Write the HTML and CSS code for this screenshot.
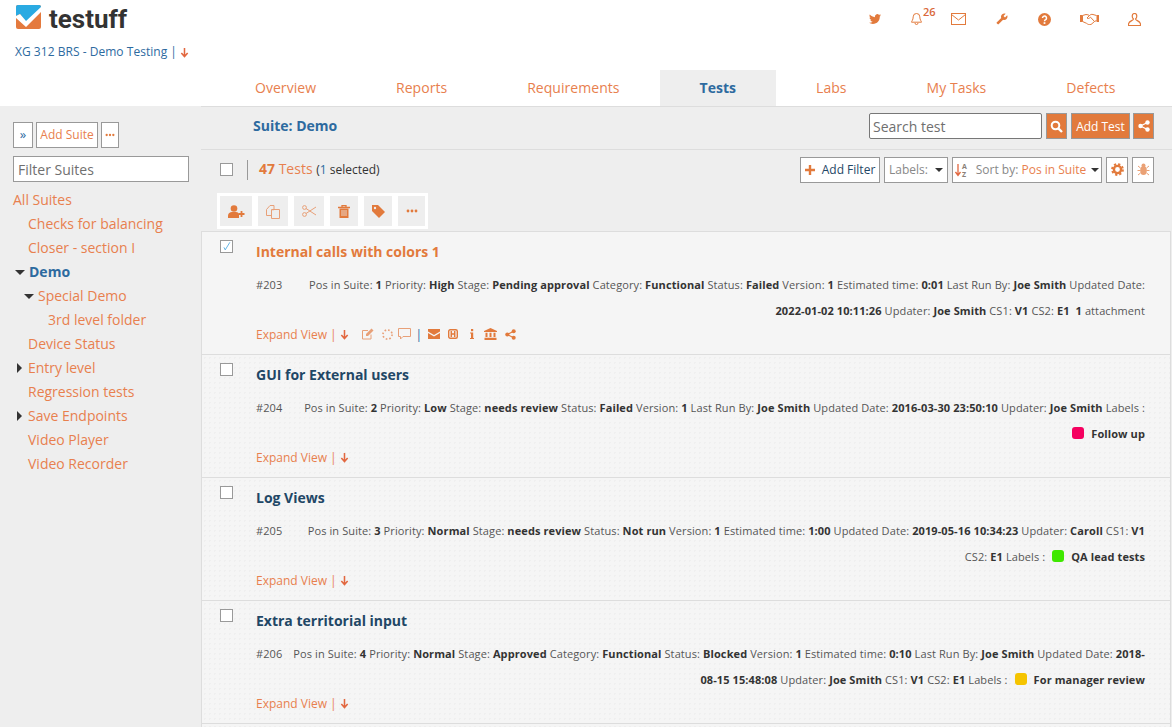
FILE: index.html
```html
<!DOCTYPE html>
<html lang="en">
<head>
    <meta charset="UTF-8">
    <meta name="viewport" content="width=device-width, initial-scale=1.0">
    <title>Testuff - Tests</title>
    <link rel="stylesheet" href="styles.css">
</head>
<body>

<svg class="defs" width="0" height="0">
    <symbol id="i-arrow" viewBox="0 0 10 12"><path d="M5 1v9M1.500 6.500 5 10.500l3.500-4" fill="none" stroke="currentColor" stroke-width="1.700"/></symbol>
    <symbol id="i-share" viewBox="0 0 12 12"><path d="M9.500 2.500 2.500 6l7 3.500" fill="none" stroke="currentColor" stroke-width="1.300"/><circle cx="9.500" cy="2.500" r="2.200" fill="currentColor"/><circle cx="2.500" cy="6" r="2.200" fill="currentColor"/><circle cx="9.500" cy="9.500" r="2.200" fill="currentColor"/></symbol>
    <symbol id="i-dots" viewBox="0 0 12 4"><circle cx="2" cy="2" r="1.400" fill="currentColor"/><circle cx="6" cy="2" r="1.400" fill="currentColor"/><circle cx="10" cy="2" r="1.400" fill="currentColor"/></symbol>
</svg>

<!-- Cabecera -->
<header class="top">
    <div class="top-row">
        <a class="logo">
            <svg class="logo-mark" width="25" height="24" viewBox="0 0 25 24">
                <rect width="25" height="24" rx="2" fill="#e47a3e"/>
                <path d="M2 0h21a2 2 0 0 1 2 2v1L10 17 4 9 0 11V2a2 2 0 0 1 2-2z" fill="#2aaae2"/>
                <path d="M0 11l4-2 6 7L25 2v5L10 22 0 13z" fill="#fff"/>
            </svg>
            <span class="logo-text">testuff</span>
        </a>
        <div class="top-icons">
            <svg width="12" height="12" viewBox="0 0 24 24"><path fill="currentColor" d="M23.950 4.570a10 10 0 0 1-2.820.78 4.960 4.960 0 0 0 2.160-2.720c-.95.56-2 .96-3.120 1.190a4.920 4.920 0 0 0-8.390 4.480C7.690 8.090 4.070 6.130 1.640 3.160a4.820 4.820 0 0 0-.67 2.480c0 1.710.87 3.210 2.190 4.100a4.900 4.900 0 0 1-2.230-.62v.06a4.920 4.920 0 0 0 3.950 4.830 5 5 0 0 1-2.210.08 4.940 4.940 0 0 0 4.600 3.420A9.870 9.870 0 0 1 0 19.540a14 14 0 0 0 7.560 2.210c9.050 0 14-7.500 14-13.980 0-.21 0-.42-.02-.63a9.940 9.940 0 0 0 2.460-2.550z"/></svg>
            <span class="bell">
                <svg width="11" height="14" viewBox="0 0 11 14"><path d="M5.500 1.500A3.300 3.300 0 0 0 2.200 4.800c0 3.400-1.700 4.300-1.700 5.400h10c0-1.100-1.700-2-1.700-5.400a3.300 3.300 0 0 0-3.300-3.300zM4 11a1.500 1.500 0 0 0 3 0" fill="none" stroke="currentColor"/></svg>
                <sup class="badge">26</sup>
            </span>
            <svg class="tight" width="15" height="12" viewBox="0 0 15 12"><rect x=".5" y=".5" width="14" height="11" fill="none" stroke="currentColor"/><path d="M.5 1.500 7.500 7l7-5.500" fill="none" stroke="currentColor"/></svg>
            <svg width="12" height="12" viewBox="0 0 24 24"><path fill="currentColor" transform="matrix(-1 0 0 1 24 0)" d="M22.700 19l-9.100-9.100c.9-2.300.4-5-1.500-6.900-2-2-5-2.400-7.400-1.300L9 6 6 9 1.600 4.700C.4 7.100.9 10.100 2.900 12.100c1.900 1.900 4.600 2.400 6.900 1.500l9.100 9.100c.4.4 1 .4 1.400 0l2.300-2.300c.5-.4.5-1.100.1-1.400z"/></svg>
            <svg width="13" height="13" viewBox="0 0 13 13"><circle cx="6.500" cy="6.500" r="6.500" fill="currentColor"/><path d="M4.500 5a2 2 0 1 1 3.100 1.700c-.8.500-1.100.9-1.100 1.500" fill="none" stroke="#fff" stroke-width="1.500"/><rect x="5.600" y="9.200" width="1.800" height="1.700" fill="#fff"/></svg>
            <svg class="tight" width="19" height="12" viewBox="0 0 19 12"><path d="M0 2h2.500v7H0zM16.500 2H19v7h-2.500z" fill="currentColor"/><path d="M2.500 2.500 6 1.500c1.500 0 2.500.5 3.500 1L7 5c1 1 2 .5 3.500-.8l4 4.300-3.500 3c-1.500.5-3 0-4.500-1.200L2.500 8.500zM16.500 2.500 13 1.500c-1.500-.4-2.500 0-3.500 1M14.500 8.500l2-1" fill="none" stroke="currentColor"/></svg>
            <svg class="tight" width="13" height="13" viewBox="0 0 13 13"><path d="M6.500.5c-1.500 0-2.300 1-2.300 2.500 0 1.300.6 2.500 1.300 3 0 1.500-4.800 2-5 5v1.500h12V11c-.2-3-5-3.500-5-5 .7-.5 1.300-1.700 1.300-3C8.800 1.500 8 .5 6.500.5z" fill="none" stroke="currentColor" stroke-width="1.200"/></svg>
        </div>
    </div>
    <div class="project">XG 312 BRS - Demo Testing | <svg class="arrow" width="9" height="11"><use href="#i-arrow"/></svg></div>
    <nav class="tabs">
        <a>Overview</a>
        <a>Reports</a>
        <a>Requirements</a>
        <a class="active">Tests</a>
        <a>Labs</a>
        <a>My Tasks</a>
        <a>Defects</a>
    </nav>
</header>

<div class="page">
    <!-- Arbol de suites -->
    <aside class="sidebar">
        <div class="side-btns">
            <button class="btn-line dark">&raquo;</button>
            <button class="btn-line">Add Suite</button>
            <button class="btn-line dots"><svg width="10" height="4"><use href="#i-dots"/></svg></button>
        </div>
        <input class="filter" type="text" placeholder="Filter Suites">
        <ul class="tree">
            <li>All Suites</li>
            <li class="l1">Checks for balancing</li>
            <li class="l1">Closer - section I</li>
            <li class="l1 open current">Demo</li>
            <li class="l2 open">Special Demo</li>
            <li class="l3">3rd level folder</li>
            <li class="l1">Device Status</li>
            <li class="l1 closed">Entry level</li>
            <li class="l1">Regression tests</li>
            <li class="l1 closed">Save Endpoints</li>
            <li class="l1">Video Player</li>
            <li class="l1">Video Recorder</li>
        </ul>
    </aside>

    <main class="main">
        <div class="suite-bar">
            <div class="suite-title">Suite: Demo</div>
            <input class="search" type="text" placeholder="Search test">
            <button class="btn-fill square"><svg width="13" height="13" viewBox="0 0 13 13"><circle cx="5.500" cy="5.500" r="3.800" fill="none" stroke="currentColor" stroke-width="2"/><path d="M8.300 8.300 12 12" stroke="currentColor" stroke-width="2.400"/></svg></button>
            <button class="btn-fill add">Add Test</button>
            <button class="btn-fill square last"><svg width="12" height="12"><use href="#i-share"/></svg></button>
        </div>

        <div class="list-bar">
            <span class="check"></span>
            <span class="divider"></span>
            <span class="count"><b>47</b> Tests <small>(<i>1</i> selected)</small></span>
            <div class="list-tools">
                <button class="btn-line tool filter-btn"><svg width="10" height="10" viewBox="0 0 10 10"><path d="M5 0v10M0 5h10" stroke="#e27a3c" stroke-width="2.400"/></svg>Add Filter</button>
                <button class="btn-line tool labels">Labels:<span class="caret"></span></button>
                <button class="btn-line tool sort">
                    <svg width="13" height="14" viewBox="0 0 13 14"><path d="M3 1v11M.5 9 3 12.500 5.500 9" fill="none" stroke="currentColor" stroke-width="1.300"/><text x="7" y="6" class="az">A</text><text x="7" y="13.500" class="az">Z</text></svg>
                    <span>Sort by: <em>Pos in Suite</em></span><span class="caret"></span>
                </button>
                <button class="btn-line tool icon"><svg width="13" height="13" viewBox="0 0 13 13"><circle cx="6.500" cy="6.500" r="3.600" fill="none" stroke="currentColor" stroke-width="2.400"/><circle cx="6.500" cy="6.500" r="5.400" fill="none" stroke="currentColor" stroke-width="2" stroke-dasharray="2.200 2.040"/></svg></button>
                <button class="btn-line tool icon"><svg class="bug" width="13" height="13" viewBox="0 0 13 13"><ellipse cx="6.500" cy="7.500" rx="3.300" ry="4.500" fill="currentColor"/><circle cx="6.500" cy="2.500" r="2" fill="currentColor"/><path d="M1 3l2.500 2M12 3 9.500 5M.5 7.500h3M12.500 7.500h-3M1 12l2.500-2M12 12 9.500 10" stroke="currentColor"/></svg></button>
            </div>
        </div>

        <div class="actions">
            <button class="act w32"><svg width="17" height="13" viewBox="0 0 17 13"><circle cx="6" cy="3.500" r="3.300" fill="currentColor"/><path d="M0 13v-2.500C0 8.500 2 7 4 7h4c1.500 0 2.500.8 3 2v4z" fill="currentColor"/><path d="M13.500 6v6M10.500 9h6" stroke="currentColor" stroke-width="1.800"/></svg></button>
            <button class="act w30 pale"><svg width="14" height="15" viewBox="0 0 14 15"><path d="M.5 5.500 4 1.500h4v4l-1 1M.5 5.500v6H5" fill="none" stroke="currentColor"/><path d="M5.500 5.500h8v9h-8z" fill="none" stroke="currentColor"/></svg></button>
            <button class="act w30 pale"><svg width="14" height="12" viewBox="0 0 14 12"><circle cx="2.500" cy="2.500" r="1.900" fill="none" stroke="currentColor"/><circle cx="2.500" cy="9.500" r="1.900" fill="none" stroke="currentColor"/><path d="M4 3.500 14 10M4 8.500 14 2" stroke="currentColor"/></svg></button>
            <button class="act w28"><svg width="12" height="13" viewBox="0 0 12 13"><path d="M4 2V.5h4V2M0 2.500h12" fill="none" stroke="currentColor" stroke-width="1.300"/><path d="M1.500 3.500h9V13h-9z" fill="currentColor"/><path d="M4 5v6M6 5v6M8 5v6" stroke="#eee" stroke-width=".8"/></svg></button>
            <button class="act w28"><svg width="13" height="13" viewBox="0 0 13 13"><path d="M0 0h6l7 7-6 6-7-7z" fill="currentColor"/><circle cx="3" cy="3" r="1.200" fill="#eee"/></svg></button>
            <button class="act w27"><svg width="12" height="4"><use href="#i-dots"/></svg></button>
        </div>

        <section class="tests">
            <article class="test first">
                <span class="check checked"><svg width="11" height="11" viewBox="0 0 13 13"><path d="M3.500 7.500 5 10.500 10.500 1.500" fill="none" stroke="#4aa8e0"/></svg></span>
                <div class="test-body">
                    <h3 class="test-name">Internal calls with colors 1</h3>
                    <p class="meta"><span class="num">#203</span>Pos in Suite: <b>1</b> Priority: <b>High</b> Stage: <b>Pending approval</b> Category: <b>Functional</b> Status: <b>Failed</b> Version: <b>1</b> Estimated time: <b>0:01</b> Last Run By: <b>Joe Smith</b> Updated Date: <b class="stamp">2022-01-02 10:11:26</b> Updater: <b>Joe Smith</b> CS1: <b>V1</b> CS2: <b>E1</b> &nbsp;<b>1</b> attachment</p>
                    <div class="expand">
                        Expand View <span class="sep">|</span> <svg class="arrow" width="9" height="11"><use href="#i-arrow"/></svg>
                        <span class="row-icons">
                            <svg class="pale" width="12" height="12" viewBox="0 0 12 12"><path d="M9 6.500V11H.5V2.500H6" fill="none" stroke="currentColor"/><path d="M4 6 9.500.5l2 2L6 8H4z" fill="currentColor"/></svg>
                            <svg class="pale" width="11" height="11" viewBox="0 0 12 12"><circle cx="6" cy="6" r="5" fill="none" stroke="currentColor" stroke-width="1.800" stroke-dasharray="1.800 2.130"/></svg>
                            <svg class="pale bubble" width="13" height="12" viewBox="0 0 13 12"><path d="M.5.500h12v8H5L2.500 11V8.500h-2z" fill="none" stroke="currentColor"/></svg>
                            <span class="sep blue">|</span>
                            <svg width="12" height="10" viewBox="0 0 12 10"><path d="M0 0h12v2.500L6 6 0 2.500z" fill="currentColor"/><path d="M0 4l6 3.500L12 4v6H0z" fill="currentColor"/></svg>
                            <svg width="10" height="10" viewBox="0 0 10 10"><rect x=".7" y=".7" width="8.600" height="8.600" rx="1.500" fill="none" stroke="currentColor" stroke-width="1.400"/><path d="M3.300 2v6M6.700 2v6M3.300 5h3.400" stroke="currentColor" stroke-width="1.500"/></svg>
                            <svg class="info" width="4" height="10" viewBox="0 0 4 10"><rect x="1" width="2.200" height="2.200" fill="currentColor"/><path d="M0 3.500h3.200V9H4v1H0V9h1V4.500H0z" fill="currentColor"/></svg>
                            <svg width="13" height="12" viewBox="0 0 13 12"><path d="M6.500 0 13 3v1H0V3zM1.500 4.800h2V9h-2zM5.500 4.800h2V9h-2zM9.500 4.800h2V9h-2zM.5 9.800h12V12H.5z" fill="currentColor"/></svg>
                            <svg width="11" height="11"><use href="#i-share"/></svg>
                        </span>
                    </div>
                </div>
            </article>

            <article class="test">
                <span class="check"></span>
                <div class="test-body">
                    <h3 class="test-name">GUI for External users</h3>
                    <p class="meta"><span class="num">#204</span>Pos in Suite: <b>2</b> Priority: <b>Low</b> Stage: <b>needs review</b> Status: <b>Failed</b> Version: <b>1</b> Last Run By: <b>Joe Smith</b> Updated Date: <b>2016-03-30 23:50:10</b> Updater: <b>Joe Smith</b> Labels : <span class="label"><span class="label-dot pink"></span><b>Follow up</b></span></p>
                    <div class="expand">Expand View <span class="sep">|</span> <svg class="arrow" width="9" height="11"><use href="#i-arrow"/></svg></div>
                </div>
            </article>

            <article class="test">
                <span class="check"></span>
                <div class="test-body">
                    <h3 class="test-name">Log Views</h3>
                    <p class="meta"><span class="num">#205</span>Pos in Suite: <b>3</b> Priority: <b>Normal</b> Stage: <b>needs review</b> Status: <b>Not run</b> Version: <b>1</b> Estimated time: <b>1:00</b> Updated Date: <b>2019-05-16 10:34:23</b> Updater: <b>Caroll</b> CS1: <b>V1</b> CS2: <b>E1</b> Labels : <span class="label"><span class="label-dot green"></span><b>QA lead tests</b></span></p>
                    <div class="expand">Expand View <span class="sep">|</span> <svg class="arrow" width="9" height="11"><use href="#i-arrow"/></svg></div>
                </div>
            </article>

            <article class="test">
                <span class="check"></span>
                <div class="test-body">
                    <h3 class="test-name">Extra territorial input</h3>
                    <p class="meta"><span class="num">#206</span>Pos in Suite: <b>4</b> Priority: <b>Normal</b> Stage: <b>Approved</b> Category: <b>Functional</b> Status: <b>Blocked</b> Version: <b>1</b> Estimated time: <b>0:10</b> Last Run By: <b>Joe Smith</b> Updated Date: <b>2018-08-15 15:48:08</b> Updater: <b>Joe Smith</b> CS1: <b>V1</b> CS2: <b>E1</b> Labels : <span class="label"><span class="label-dot yellow"></span><b>For manager review</b></span></p>
                    <div class="expand">Expand View <span class="sep">|</span> <svg class="arrow" width="9" height="11"><use href="#i-arrow"/></svg></div>
                </div>
            </article>

            <article class="test tail"></article>
        </section>
    </main>
</div>

</body>
</html>
```

FILE: styles.css
```css
html, body {
    margin: 0;
    height: 727px;
    overflow: hidden;
}
body {
    font-family: "Open Sans", Arial, sans-serif;
    font-size: 14px;
    color: #333;
    background-color: #eee;
}
.defs {
    position: absolute;
}
button {
    font-family: inherit;
    cursor: pointer;
}
svg {
    flex: none;
}

/* Cabecera */
.top {
    height: 106px;
    background-color: #fff;
}
.top-row {
    display: flex;
    justify-content: space-between;
    height: 40px;
}
.logo {
    display: flex;
    align-items: flex-start;
    padding: 5px 0 0 16px;
}
.logo-text {
    margin-left: 8px;
    margin-top: -5px;
    font-family: Roboto, Arial, sans-serif;
    font-size: 26px;
    font-weight: 700;
    line-height: 38px;
    color: #333;
}
.top-icons {
    display: flex;
    align-items: center;
    gap: 30px;
    height: 38px;
    padding-right: 31px;
    color: #e27a3c;
}
.top-icons .tight {
    margin-left: -1px;
}
.bell {
    position: relative;
    display: flex;
}
.badge {
    position: absolute;
    left: 12px;
    top: -6px;
    font-size: 11px;
    font-weight: 600;
    line-height: 12px;
    color: #d9683a;
}
.project {
    height: 30px;
    padding-left: 15px;
    font-size: 12px;
    letter-spacing: .03px;
    line-height: 24px;
    color: #2d6a9f;
}
.arrow {
    color: #e2673f;
    vertical-align: -2px;
}
.tabs {
    display: flex;
    height: 36px;
    padding-left: 215px;
}
.tabs a {
    padding: 0 40px;
    letter-spacing: .04px;
    line-height: 36px;
    color: #e8804e;
}
.tabs a.active {
    background-color: #eee;
    font-weight: 700;
    color: #2d6a9f;
}

/* Estructura */
.page {
    display: flex;
    height: 621px;
    overflow: hidden;
}
.sidebar {
    width: 201px;
    flex: none;
    box-sizing: border-box;
    padding: 16px 12px 0 13px;
}
.main {
    flex: 1;
    min-width: 0;
    border-top: 1px solid #ddd;
}

/* Botones */
.btn-line {
    height: 26px;
    padding: 0;
    border: 1px solid #999;
    background-color: #fff;
    font-size: 12px;
    color: #e8804e;
}
.btn-fill {
    height: 26px;
    padding: 0;
    border: 1px solid #999;
    background-color: #e27a3c;
    font-size: 12px;
    color: #fff;
}
.btn-fill.square {
    display: flex;
    align-items: center;
    justify-content: center;
    width: 21px;
    margin-left: 4px;
}
.btn-fill.square.last {
    margin-left: 3px;
}
.btn-fill.add {
    width: 59px;
    margin-left: 4px;
}
.caret {
    display: inline-block;
    width: 0;
    height: 0;
    border-top: 4px solid #333;
    border-left: 4px solid transparent;
    border-right: 4px solid transparent;
}

/* Panel izquierdo */
.side-btns {
    display: flex;
    gap: 3px;
    color: #2d6a9f;
}
.side-btns .btn-line {
    width: 62px;
    padding-bottom: 2px;
}
.side-btns .btn-line.dark {
    width: 20px;
    font-size: 13px;
    color: #2d6a9f;
}
.side-btns .btn-line.dots {
    display: flex;
    align-items: center;
    justify-content: center;
    width: 18px;
    padding-bottom: 0;
    color: #e27a3c;
}
.filter {
    display: block;
    width: 176px;
    height: 26px;
    box-sizing: border-box;
    margin-top: 8px;
    padding: 0 4px;
    border: 1px solid #999;
    font-family: inherit;
    font-size: 14px;
}
.filter::placeholder, .search::placeholder {
    color: #6f6f6f;
    opacity: 1;
}
.tree {
    margin: 6px 0 0;
    padding: 0;
    list-style: none;
}
.tree li {
    position: relative;
    height: 24px;
    line-height: 24px;
    color: #e8804e;
}
.tree .l1 {
    padding-left: 15px;
}
.tree .l2 {
    padding-left: 25px;
}
.tree .l3 {
    padding-left: 35px;
}
.tree .current {
    padding-left: 16px;
    font-weight: 700;
    color: #2d6a9f;
}
.tree .open::before {
    content: "";
    position: absolute;
    top: 10px;
    margin-left: -14px;
    border-top: 5px solid #333;
    border-left: 5px solid transparent;
    border-right: 5px solid transparent;
}
.tree .closed::before {
    content: "";
    position: absolute;
    top: 7px;
    margin-left: -11px;
    border-left: 5px solid #333;
    border-top: 5px solid transparent;
    border-bottom: 5px solid transparent;
}

/* Barra de la suite */
.suite-bar {
    display: flex;
    align-items: flex-start;
    box-sizing: border-box;
    height: 43px;
    padding: 6px 18px 0 52px;
    border-bottom: 1px solid #ddd;
}
.suite-title {
    flex: 1;
    font-weight: 700;
    line-height: 26px;
    color: #2d6a9f;
}
.search {
    width: 173px;
    height: 26px;
    box-sizing: border-box;
    padding: 0 3px;
    border: 1px solid #777;
    border-radius: 2px;
    font-family: inherit;
    font-size: 14px;
}

/* Barra de la lista */
.list-bar {
    display: flex;
    align-items: center;
    height: 39px;
    padding: 0 18px 0 19px;
}
.check {
    display: block;
    flex: none;
    width: 11px;
    height: 11px;
    border: 1px solid #999;
    background-color: #fff;
}
.divider {
    width: 1px;
    height: 20px;
    margin-left: 14px;
    background-color: #999;
}
.count {
    margin: -2px 0 0 11px;
    color: #e8804e;
}
.count b {
    color: #e27a3c;
}
.count small {
    font-size: 12px;
    color: #333;
}
.count i {
    font-style: normal;
    color: #2d6a9f;
}
.list-tools {
    display: flex;
    gap: 4px;
    margin-left: auto;
}
.tool {
    display: flex;
    align-items: center;
    justify-content: center;
    color: #888;
}
.filter-btn {
    width: 80px;
    gap: 7px;
    color: #1f4766;
}
.labels {
    width: 64px;
    gap: 7px;
}
.sort {
    width: 150px;
    gap: 5px;
}
.sort svg {
    color: #e2673f;
}
.sort span:first-of-type {
    margin-left: 3px;
}
.sort em {
    font-style: normal;
    color: #e8804e;
}
.az {
    font-size: 7px;
    font-weight: 700;
    fill: #8a7f78;
}
.tool.icon {
    width: 22px;
    color: #e27a3c;
}
.tool .bug {
    opacity: .7;
}

/* Acciones */
.actions {
    display: inline-flex;
    gap: 6px;
    margin: 4px 0 0 16px;
    padding: 3px;
    background-color: #fff;
    vertical-align: top;
}
.act {
    display: flex;
    align-items: center;
    justify-content: center;
    height: 30px;
    padding: 0;
    border: none;
    background-color: #eee;
    color: #e27a3c;
}
.act.pale {
    color: #e8a078;
}
.w32 { width: 32px; }
.w30 { width: 30px; }
.w28 { width: 28px; }
.w27 { width: 27px; }

/* Lista de tests */
.tests {
    margin: 2px 1px 0 0;
    border-top: 1px solid #ddd;
    border-left: 1px solid #ddd;
    border-right: 1px solid #ddd;
}
.test {
    display: flex;
    box-sizing: border-box;
    height: 123px;
    padding-right: 25px;
    border-bottom: 1px solid #ddd;
    background-color: #f5f5f5;
    background-image: radial-gradient(#efefef 1px, transparent 1px);
    background-size: 5px 5px;
}
.test.first {
    background-image: none;
}
.test.tail {
    height: 3px;
    border-bottom: none;
}
.test > .check {
    margin: 8px 0 0 18px;
}
.test .checked {
    display: flex;
}
.test-body {
    flex: 1;
    min-width: 0;
    margin-left: 23px;
}
.test-name {
    margin: 10px 0 0;
    font-size: 14px;
    font-weight: 700;
    line-height: 20px;
    color: #1f4766;
}
.first .test-name {
    color: #e27a3c;
}
.meta {
    height: 52px;
    margin: 10px 0 0;
    font-size: 11px;
    letter-spacing: .1px;
    line-height: 26px;
    text-align: right;
    color: #555;
}
.meta b {
    font-weight: 700;
    color: #333;
}
.meta .stamp {
    white-space: nowrap;
}
.num {
    float: left;
    margin-right: 10px;
}
.label {
    white-space: nowrap;
}
.label-dot {
    display: inline-block;
    width: 12px;
    height: 12px;
    margin: 0 7px 0 4px;
    border-radius: 3px;
    vertical-align: -1px;
}
.pink { background-color: #f5005f; }
.green { background-color: #3fe800; }
.yellow { background-color: #f5c400; }
.expand {
    display: flex;
    align-items: center;
    gap: 3px;
    height: 18px;
    margin-top: 1px;
    font-size: 12px;
    color: #e8804e;
}
.sep {
    color: #e8804e;
}
.row-icons {
    display: flex;
    align-items: center;
    gap: 8px;
    margin-left: 10px;
    color: #e27a3c;
}
.row-icons .pale {
    color: #e8a078;
}
.row-icons .bubble {
    margin-left: -3px;
}
.sep.blue {
    margin: 0 -2px 0 -3px;
    color: #2d6a9f;
}
.info {
    margin: 0 2px 0 4px;
}
```
